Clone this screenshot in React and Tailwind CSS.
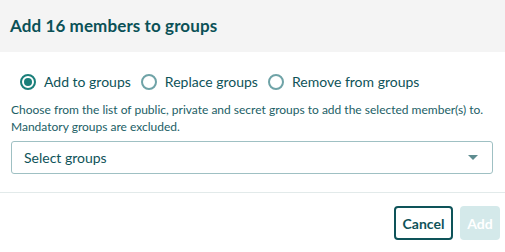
export default function App() {
  const font = { fontFamily: '"Lato", "Open Sans", sans-serif' };
  return (
    <div className="w-[505px] h-[252px] bg-white text-[#0e5359] flex flex-col" style={font}>
      <div className="h-[52px] bg-[#f4f4f4] flex items-center px-[10px] shrink-0">
        <h1 className="text-[17px] font-bold text-[#0b5157] tracking-[0.1px]">Add 16 members to groups</h1>
      </div>
      <div className="px-[11px] pt-[19px] pb-[18px] border-b border-[#e2eaea]">
        <div className="flex items-center gap-[10px] pl-[9px] text-[14px]">
          <label className="flex items-center gap-[8px]">
            <span className="w-[16px] h-[16px] rounded-full border-2 border-[#1a7f7a] flex items-center justify-center">
              <span className="w-[8px] h-[8px] rounded-full bg-[#1a7f7a]" />
            </span>
            <span>Add to groups</span>
          </label>
          <label className="flex items-center gap-[8px]">
            <span className="w-[16px] h-[16px] rounded-full border-2 border-[#6fa3a7]" />
            <span>Replace groups</span>
          </label>
          <label className="flex items-center gap-[8px]">
            <span className="w-[16px] h-[16px] rounded-full border-2 border-[#6fa3a7]" />
            <span>Remove from groups</span>
          </label>
        </div>
        <p className="mt-[9px] text-[12px] leading-[17px] text-[#1b6066]">
          Choose from the list of public, private and secret groups to add the selected member(s) to.
          <br />
          Mandatory groups are excluded.
        </p>
        <div className="mt-[6px] h-[33px] w-[482px] border border-[#9fc0c3] rounded-[3px] flex items-center justify-between pl-[12px] pr-[14px] text-[14px]">
          <span>Select groups</span>
          <svg width="10" height="6" viewBox="0 0 10 6"><path d="M0 0h10L5 5z" fill="#5e8c90" /></svg>
        </div>
      </div>
      <div className="flex justify-end gap-[7px] pt-[13px] pr-[5px]">
        <button className="h-[34px] w-[59px] border-2 border-[#0e5359] rounded-[4px] text-[14px] font-bold text-[#0e5359]">Cancel</button>
        <button className="h-[34px] w-[40px] rounded-[4px] bg-[#d4e9ea] text-[14px] font-bold text-white">Add</button>
      </div>
    </div>
  );
}
